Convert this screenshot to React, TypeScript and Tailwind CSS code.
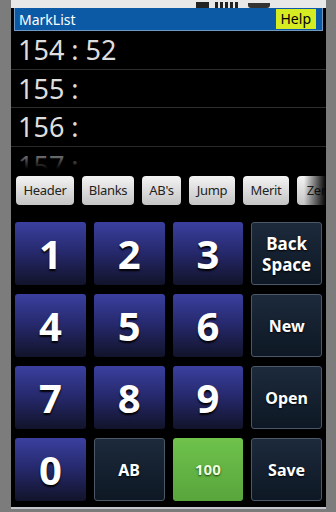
import React from "react";

const rows = ["154 : 52", "155 :", "156 :", "157 :"];
const tools = [
  { label: "Header", w: "w-[58px]" },
  { label: "Blanks", w: "w-[52px]" },
  { label: "AB's", w: "w-[39px]" },
  { label: "Jump", w: "w-[46px]" },
  { label: "Merit", w: "w-[46px]" },
  { label: "Zero", w: "w-[46px]" },
];

type Key = { label: string; kind: "num" | "dark" | "green" };

const keys: Key[] = [
  { label: "1", kind: "num" },
  { label: "2", kind: "num" },
  { label: "3", kind: "num" },
  { label: "Back Space", kind: "dark" },
  { label: "4", kind: "num" },
  { label: "5", kind: "num" },
  { label: "6", kind: "num" },
  { label: "New", kind: "dark" },
  { label: "7", kind: "num" },
  { label: "8", kind: "num" },
  { label: "9", kind: "num" },
  { label: "Open", kind: "dark" },
  { label: "0", kind: "num" },
  { label: "AB", kind: "dark" },
  { label: "100", kind: "green" },
  { label: "Save", kind: "dark" },
];

const KeyButton: React.FC<{ k: Key }> = ({ k }) => {
  if (k.kind === "num") {
    return (
      <button className="h-[63px] rounded-[3px] bg-gradient-to-b from-[#3b40a0] via-[#25286a] to-[#12132a] text-white font-bold text-[40px] leading-none [text-shadow:0_2px_2px_#000] flex items-center justify-center">
        {k.label}
      </button>
    );
  }
  if (k.kind === "green") {
    return (
      <button className="h-[63px] rounded-[3px] bg-gradient-to-b from-[#6fc24c] to-[#58a53c] text-[#eaffd8] font-bold text-[15px] [text-shadow:0_1px_2px_#1d3a10] flex items-center justify-center">
        {k.label}
      </button>
    );
  }
  return (
    <button className="h-[63px] rounded-[3px] border border-[#4b5868] bg-gradient-to-b from-[#1c2a3c] to-[#0e1824] text-white font-bold text-[16px] leading-[20px] [text-shadow:0_1px_2px_#000] flex flex-col items-center justify-center text-center">
      {k.label === "Back Space" ? (
        <>
          <span className="text-[17px] leading-[21px]">Back</span>
          <span className="text-[17px] leading-[21px]">Space</span>
        </>
      ) : (
        k.label
      )}
    </button>
  );
};

export default function App() {
  return (
    <div
      className="w-[336px] h-[512px] bg-[#7c7c7c] flex flex-col overflow-hidden"
      style={{ fontFamily: '"Noto Sans", "Open Sans", sans-serif' }}
    >
      <div className="h-[507px] ml-[11px] mr-[10px] bg-black flex flex-col overflow-hidden">
        {/* status bar */}
        <div className="h-[8px] shrink-0 bg-[#e8e8e8] flex items-end justify-end gap-[6px] pr-[56px] overflow-hidden">
          <div className="w-[13px] h-[6px] bg-[#222]" />
          <div className="flex items-end gap-[2px] h-[6px]">
            <div className="w-[3px] h-[6px] bg-[#222]" />
            <div className="w-[3px] h-[6px] bg-[#222]" />
            <div className="w-[3px] h-[6px] bg-[#222]" />
            <div className="w-[3px] h-[6px] bg-[#222]" />
            <div className="w-[3px] h-[6px] bg-[#222]" />
          </div>
          <div className="w-[22px] h-[5px] bg-[#333] rounded-b-[3px] ml-[4px]" />
        </div>

        {/* title bar */}
        <div className="mx-[3px] h-[23px] shrink-0 bg-[#0c5aa5] border-x border-b border-[#6f98c4] flex items-center justify-between pl-[4px] pr-[6px]">
          <span className="text-white text-[14px]">MarkList</span>
          <span className="bg-[#d6ec22] text-black text-[14px] leading-[20px] h-[20px] px-[5px]">
            Help
          </span>
        </div>

        {/* list */}
        <div className="relative h-[138px] shrink-0 overflow-hidden">
          {rows.map((r) => (
            <div
              key={r}
              className="h-[38.5px] border-b border-[#2e2e2e] flex items-center pl-[7px] text-[#dedede] text-[27px] leading-none"
            >
              {r}
            </div>
          ))}
          <div className="absolute left-0 right-0 bottom-0 h-[26px] bg-gradient-to-b from-transparent to-black" />
        </div>

        {/* toolbar */}
        <div className="relative mt-[7px] h-[29px] shrink-0 flex gap-[8px] pl-[5px] overflow-hidden">
          {tools.map((t) => (
            <button
              key={t.label}
              className={`${t.w} shrink-0 h-[29px] rounded-[4px] bg-gradient-to-b from-[#f4f4f4] to-[#c4c4c4] text-[#222] text-[13px] tracking-[-0.3px] flex items-center justify-center`}
            >
              {t.label}
            </button>
          ))}
          <div className="absolute right-0 top-0 bottom-0 w-[22px] bg-gradient-to-r from-transparent to-black" />
        </div>

        {/* keypad */}
        <div className="mt-[17px] px-[4px] grid grid-cols-4 gap-x-[8px] gap-y-[9px]">
          {keys.map((k) => (
            <KeyButton key={k.label} k={k} />
          ))}
        </div>
      </div>
      <div className="h-[2px] ml-[11px] mr-[10px] bg-[#c4c6cc]" />
    </div>
  );
}
